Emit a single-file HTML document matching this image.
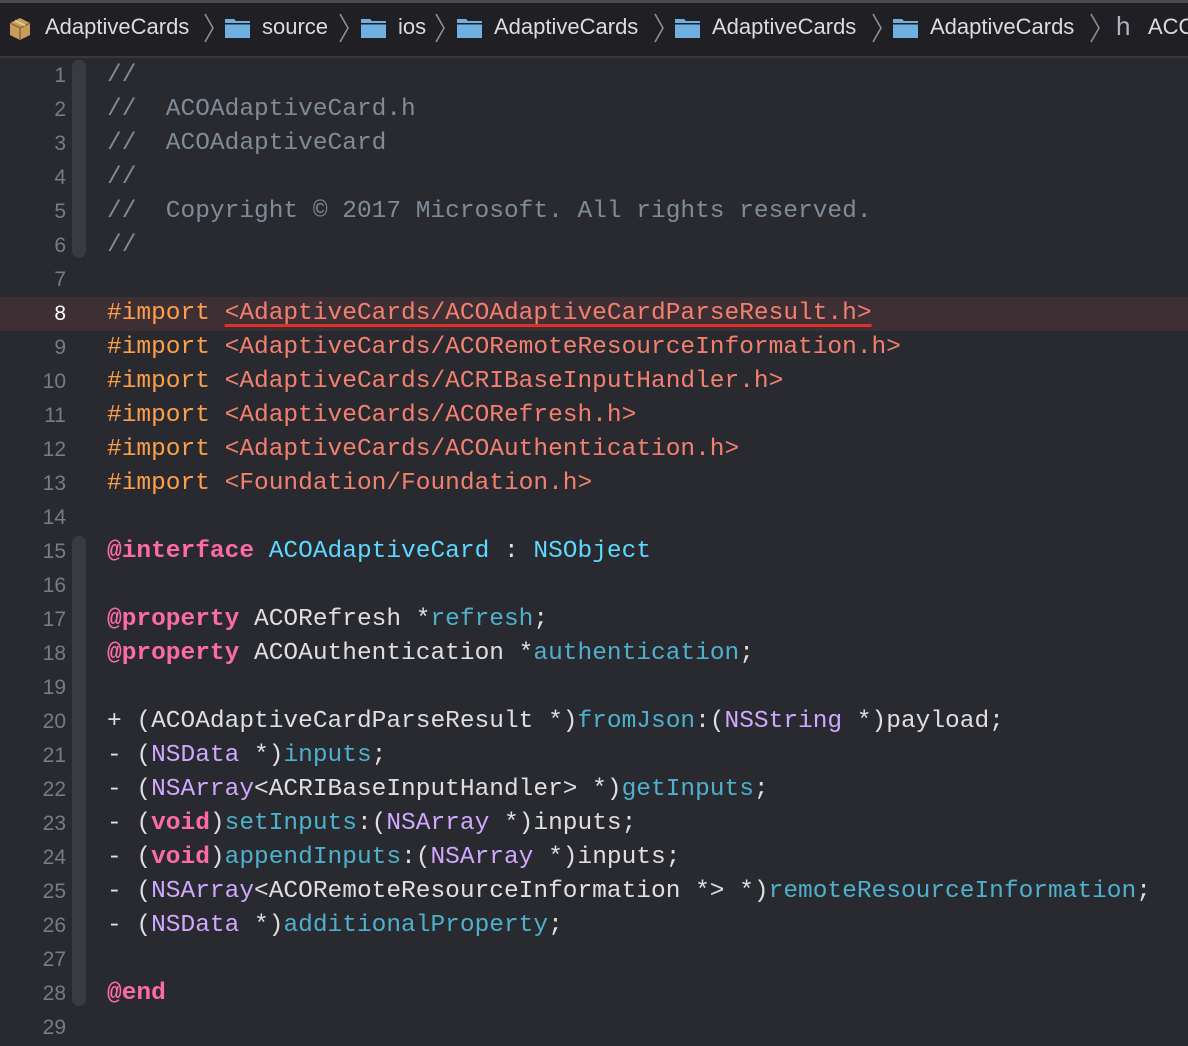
<!DOCTYPE html>
<html><head><meta charset="utf-8">
<style>
html,body{margin:0;padding:0;width:1188px;height:1046px;overflow:hidden;background:#292a30;}
#top{position:absolute;left:0;top:0;width:1188px;height:3px;background:#4a4a4e;}
#bar{position:absolute;left:0;top:3px;width:1188px;height:53px;background:#1f1f24;}
#sep{position:absolute;left:0;top:56px;width:1188px;height:2px;background:#38383d;}
.bc{position:absolute;top:14px;font-family:"Liberation Sans",sans-serif;font-size:22px;color:#dcdcdf;white-space:nowrap;}
.ch{position:absolute;top:12px;}
.fd{position:absolute;top:18px;width:26px;height:19px;}
.ln{position:absolute;left:0;width:66px;text-align:right;font-family:"Liberation Sans",sans-serif;font-size:21px;color:#7a7b80;height:34px;line-height:34px;}
.code{position:absolute;left:107px;font-family:"Liberation Mono",monospace;font-size:24.5px;height:34px;line-height:34px;white-space:pre;color:#dfdfe0;}
.rib{position:absolute;left:72px;width:14px;background:#3a3b40;border-radius:0 0 7px 7px;}
.c{color:#7f8c98}.p{color:#fd9f4a}.s{color:#f3806e}.k{color:#fc6ba8;font-weight:bold}
.t{color:#5dd8ff}.o{color:#d0a8ff}.f{color:#4eb0cc}
</style></head><body>
<div id="top"></div><div id="bar"></div><div id="sep"></div>
<svg style="position:absolute;left:8px;top:17px" width="24" height="24" viewBox="0 0 24 24"><path d="M12 1 L22 6 L22 18 L12 23 L2 18 L2 6 Z" fill="#c79d5e"/><path d="M2 6 L12 11 L22 6 M12 11 L12 23" stroke="#8a6a35" stroke-width="1.5" fill="none"/><path d="M7 3.5 L17 8.5" stroke="#e8c78e" stroke-width="2"/></svg>
<div class="bc" style="left:45px">AdaptiveCards</div>
<div class="bc" style="left:262px">source</div>
<div class="bc" style="left:398px">ios</div>
<div class="bc" style="left:494px">AdaptiveCards</div>
<div class="bc" style="left:712px">AdaptiveCards</div>
<div class="bc" style="left:930px">AdaptiveCards</div>
<div class="bc" style="left:1116px;color:#aeb3c0;font-size:26px;top:11px">h</div>
<div class="bc" style="left:1148px">ACO</div>
<svg style="position:absolute;left:0;top:0" width="1188" height="56">
<g stroke="#8e8e93" stroke-width="1.6" fill="none">
<path d="M205 14 L213 28 L205 42"/><path d="M340 14 L348 28 L340 42"/><path d="M436 14 L444 28 L436 42"/><path d="M655 14 L663 28 L655 42"/><path d="M873 14 L881 28 L873 42"/><path d="M1091 14 L1099 28 L1091 42"/>
</g>
<g fill="#6fb0e0">
<path d="M225 19 h9 l2 2 h14 v17 h-25 z"/><path d="M361 19 h9 l2 2 h14 v17 h-25 z"/><path d="M457 19 h9 l2 2 h14 v17 h-25 z"/><path d="M675 19 h9 l2 2 h14 v17 h-25 z"/><path d="M893 19 h9 l2 2 h14 v17 h-25 z"/>
</g>
<g fill="#1f1f24"><rect x="225" y="23" width="25" height="1.5"/><rect x="361" y="23" width="25" height="1.5"/><rect x="457" y="23" width="25" height="1.5"/><rect x="675" y="23" width="25" height="1.5"/><rect x="893" y="23" width="25" height="1.5"/></g>
</svg>

<div style="position:absolute;left:0;top:297px;width:1188px;height:34px;background:#3e2f34"></div>
<div class="rib" style="top:60px;height:198px;border-radius:7px 7px 7px 7px"></div>
<div class="rib" style="top:536px;height:470px;border-radius:7px"></div>

<div class="ln" style="top:59px">1</div><div class="ln" style="top:93px">2</div><div class="ln" style="top:127px">3</div><div class="ln" style="top:161px">4</div><div class="ln" style="top:195px">5</div><div class="ln" style="top:229px">6</div><div class="ln" style="top:263px">7</div><div class="ln" style="top:297px;color:#ffffff">8</div><div class="ln" style="top:331px">9</div><div class="ln" style="top:365px">10</div><div class="ln" style="top:399px">11</div><div class="ln" style="top:433px">12</div><div class="ln" style="top:467px">13</div><div class="ln" style="top:501px">14</div><div class="ln" style="top:535px">15</div><div class="ln" style="top:569px">16</div><div class="ln" style="top:603px">17</div><div class="ln" style="top:637px">18</div><div class="ln" style="top:671px">19</div><div class="ln" style="top:705px">20</div><div class="ln" style="top:739px">21</div><div class="ln" style="top:773px">22</div><div class="ln" style="top:807px">23</div><div class="ln" style="top:841px">24</div><div class="ln" style="top:875px">25</div><div class="ln" style="top:909px">26</div><div class="ln" style="top:943px">27</div><div class="ln" style="top:977px">28</div><div class="ln" style="top:1011px">29</div>

<div class="code c" style="top:59px">//</div>
<div class="code c" style="top:93px">//  ACOAdaptiveCard.h</div>
<div class="code c" style="top:127px">//  ACOAdaptiveCard</div>
<div class="code c" style="top:161px">//</div>
<div class="code c" style="top:195px">//  Copyright © 2017 Microsoft. All rights reserved.</div>
<div class="code c" style="top:229px">//</div>
<div class="code" style="top:297px"><span class="p">#import </span><span class="s" style="text-decoration:underline;text-decoration-color:#e0302a;text-decoration-thickness:3px;text-underline-offset:5px">&lt;AdaptiveCards/ACOAdaptiveCardParseResult.h&gt;</span></div>
<div class="code" style="top:331px"><span class="p">#import </span><span class="s">&lt;AdaptiveCards/ACORemoteResourceInformation.h&gt;</span></div>
<div class="code" style="top:365px"><span class="p">#import </span><span class="s">&lt;AdaptiveCards/ACRIBaseInputHandler.h&gt;</span></div>
<div class="code" style="top:399px"><span class="p">#import </span><span class="s">&lt;AdaptiveCards/ACORefresh.h&gt;</span></div>
<div class="code" style="top:433px"><span class="p">#import </span><span class="s">&lt;AdaptiveCards/ACOAuthentication.h&gt;</span></div>
<div class="code" style="top:467px"><span class="p">#import </span><span class="s">&lt;Foundation/Foundation.h&gt;</span></div>
<div class="code" style="top:535px"><span class="k">@interface</span> <span class="t">ACOAdaptiveCard</span> : <span class="t">NSObject</span></div>
<div class="code" style="top:603px"><span class="k">@property</span> ACORefresh *<span class="f">refresh</span>;</div>
<div class="code" style="top:637px"><span class="k">@property</span> ACOAuthentication *<span class="f">authentication</span>;</div>
<div class="code" style="top:705px">+ (ACOAdaptiveCardParseResult *)<span class="f">fromJson</span>:(<span class="o">NSString</span> *)payload;</div>
<div class="code" style="top:739px">- (<span class="o">NSData</span> *)<span class="f">inputs</span>;</div>
<div class="code" style="top:773px">- (<span class="o">NSArray</span>&lt;ACRIBaseInputHandler&gt; *)<span class="f">getInputs</span>;</div>
<div class="code" style="top:807px">- (<span class="k">void</span>)<span class="f">setInputs</span>:(<span class="o">NSArray</span> *)inputs;</div>
<div class="code" style="top:841px">- (<span class="k">void</span>)<span class="f">appendInputs</span>:(<span class="o">NSArray</span> *)inputs;</div>
<div class="code" style="top:875px">- (<span class="o">NSArray</span>&lt;ACORemoteResourceInformation *&gt; *)<span class="f">remoteResourceInformation</span>;</div>
<div class="code" style="top:909px">- (<span class="o">NSData</span> *)<span class="f">additionalProperty</span>;</div>
<div class="code" style="top:977px"><span class="k">@end</span></div>
</body></html>
